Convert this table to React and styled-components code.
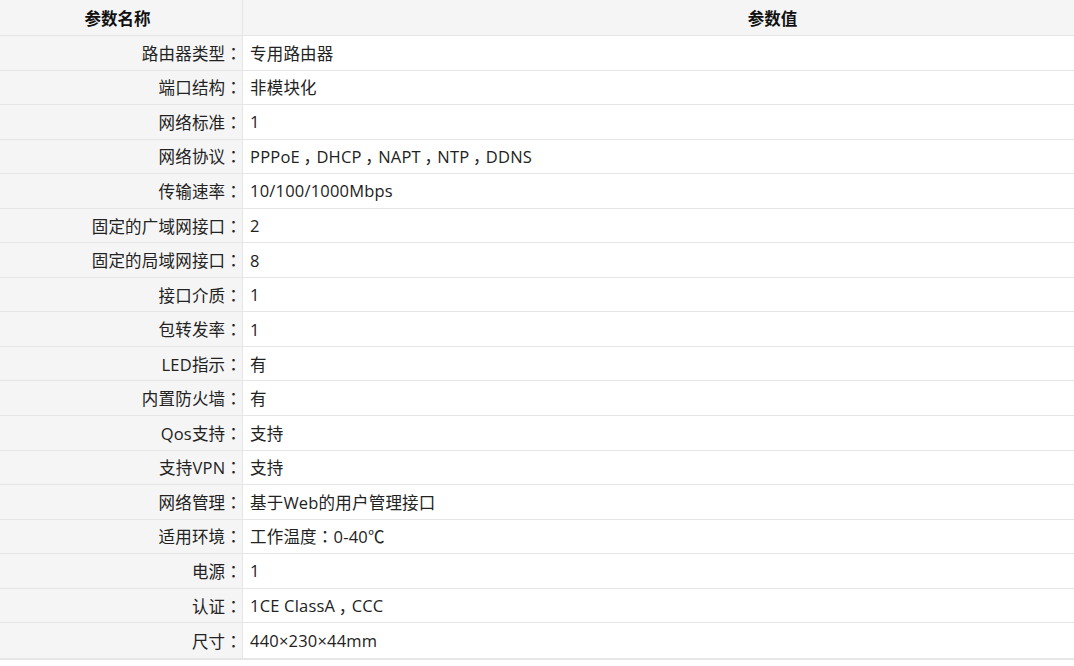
import styled, { createGlobalStyle } from "styled-components";

const GlobalStyle = createGlobalStyle`
  html, body {
    margin: 0;
    padding: 0;
    background: #fff;
  }
  body {
    font-family: "Open Sans", "Noto Sans CJK SC", sans-serif;
    color: #222;
  }
`;

const Table = styled.div`
  width: 100%;
  border-bottom: 2px solid #e6e6e6;
`;

const Row = styled.div`
  display: grid;
  grid-template-columns: 242px 1fr;
  height: ${(p) => (p.$head ? "36px" : "34.55px")};
  border-bottom: 1px solid #e6e6e6;
  box-sizing: border-box;
  &:last-child {
    border-bottom: none;
  }
`;

const HeadCell = styled.div`
  display: flex;
  align-items: center;
  justify-content: center;
  padding: ${(p) => (p.$right ? "0 0 0 228px" : "0 7px 0 0")};
  background: #f5f5f5;
  font-weight: 700;
  font-size: 16.5px;
  color: #111;
  font-family: "Noto Sans CJK SC", sans-serif;
  border-left: ${(p) => (p.$right ? "1px solid #e6e6e6" : "none")};
`;

const NameCell = styled.div`
  display: flex;
  align-items: center;
  justify-content: flex-end;
  background: #f5f5f5;
  font-size: 16.5px;
  letter-spacing: 0.2px;
  white-space: nowrap;
`;

const ValueCell = styled.div`
  display: flex;
  align-items: center;
  padding-left: 7px;
  border-left: 1px solid #e6e6e6;
  font-size: 16.5px;
  letter-spacing: 0.2px;
  white-space: nowrap;
`;

const Colon = styled.span`
  font-family: "Noto Sans CJK TC", sans-serif;
`;

// full-width comma on the baseline, moved to the middle of its 1em slot
const Comma = styled.span`
  font-family: "Noto Sans CJK SC", sans-serif;
  padding-left: 0.22em;
  letter-spacing: -0.22em;
`;

const params = [
  ["路由器类型", "专用路由器"],
  ["端口结构", "非模块化"],
  ["网络标准", "1"],
  ["网络协议", "PPPoE，DHCP，NAPT，NTP，DDNS"],
  ["传输速率", "10/100/1000Mbps"],
  ["固定的广域网接口", "2"],
  ["固定的局域网接口", "8"],
  ["接口介质", "1"],
  ["包转发率", "1"],
  ["LED指示", "有"],
  ["内置防火墙", "有"],
  ["Qos支持", "支持"],
  ["支持VPN", "支持"],
  ["网络管理", "基于Web的用户管理接口"],
  ["适用环境", "工作温度：0-40℃"],
  ["电源", "1"],
  ["认证", "1CE ClassA，CCC"],
  ["尺寸", "440×230×44mm"],
];

const withPunct = (text) =>
  text.split(/([，：])/).map((part, i) => {
    if (part === "，") return <Comma key={i}>{part}</Comma>;
    if (part === "：") return <Colon key={i}>{part}</Colon>;
    return part;
  });

export default function App() {
  return (
    <>
      <GlobalStyle />
      <Table>
        <Row $head>
          <HeadCell>参数名称</HeadCell>
          <HeadCell $right>参数值</HeadCell>
        </Row>
        {params.map(([name, value]) => (
          <Row key={name}>
            <NameCell>
              {name}
              <Colon>：</Colon>
            </NameCell>
            <ValueCell>{withPunct(value)}</ValueCell>
          </Row>
        ))}
      </Table>
    </>
  );
}
